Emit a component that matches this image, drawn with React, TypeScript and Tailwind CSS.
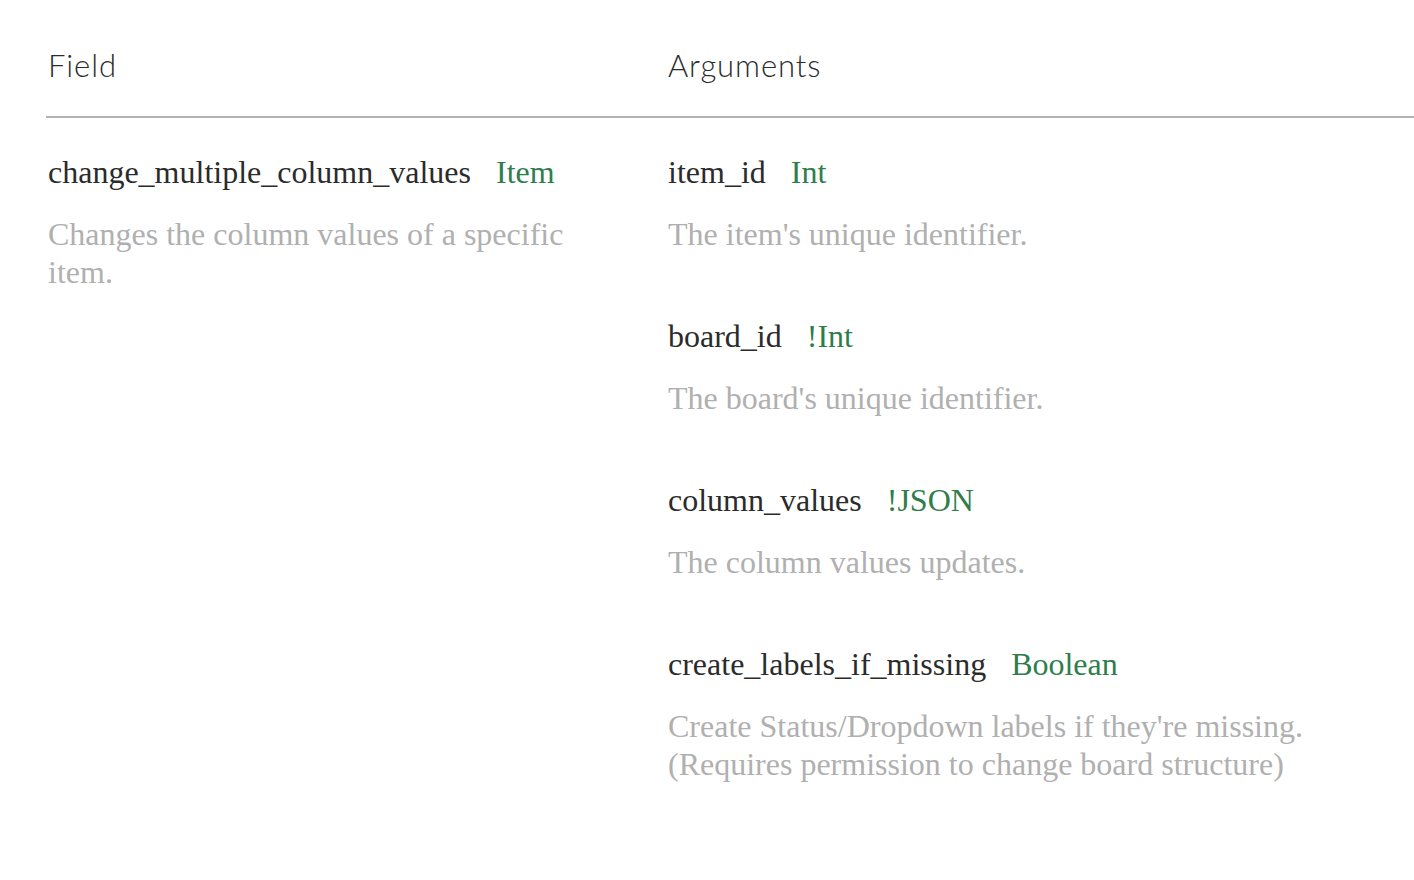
import React from "react";

type Arg = { name: string; type: string; desc: string[] };

const args: Arg[] = [
  { name: "item_id", type: "Int", desc: ["The item's unique identifier."] },
  { name: "board_id", type: "!Int", desc: ["The board's unique identifier."] },
  { name: "column_values", type: "!JSON", desc: ["The column values updates."] },
  {
    name: "create_labels_if_missing",
    type: "Boolean",
    desc: [
      "Create Status/Dropdown labels if they're missing.",
      "(Requires permission to change board structure)",
    ],
  },
];

const serif = { fontFamily: '"Liberation Serif", "Times New Roman", serif' };
const sans = { fontFamily: 'Lato, "Open Sans", sans-serif' };

function Title({ name, type }: { name: string; type: string }) {
  return (
    <div className="text-[32px] leading-[38px] text-[#2b2b2b] whitespace-nowrap">
      <span>{name}</span>
      <span className="ml-[25px] text-[#2f7d4b]">{type}</span>
    </div>
  );
}

export default function App() {
  return (
    <div className="w-[1414px] h-[880px] bg-white pl-[46px] overflow-hidden">
      <div
        className="flex pt-[46px] pb-[32px] border-b-2 border-[#b3b3b3] text-[31px] leading-[38px] tracking-[0.9px] text-[#2b2b2b] font-light"
        style={sans}
      >
        <div className="w-[620px] pl-[2px]">Field</div>
        <div className="pl-[2px]">Arguments</div>
      </div>
      <div className="flex pt-[35px]" style={serif}>
        <div className="w-[620px] pl-[2px] pr-[50px]">
          <Title name="change_multiple_column_values" type="Item" />
          <div className="mt-[24px] text-[32px] leading-[38px] text-[#b0b0b0]">
            Changes the column values of a specific item.
          </div>
        </div>
        <div className="flex flex-col gap-[64px] pl-[2px]">
          {args.map((a) => (
            <div key={a.name}>
              <Title name={a.name} type={a.type} />
              <div className="mt-[24px] text-[32px] leading-[38px] text-[#b0b0b0] whitespace-nowrap">
                {a.desc.map((d) => (
                  <div key={d}>{d}</div>
                ))}
              </div>
            </div>
          ))}
        </div>
      </div>
    </div>
  );
}
